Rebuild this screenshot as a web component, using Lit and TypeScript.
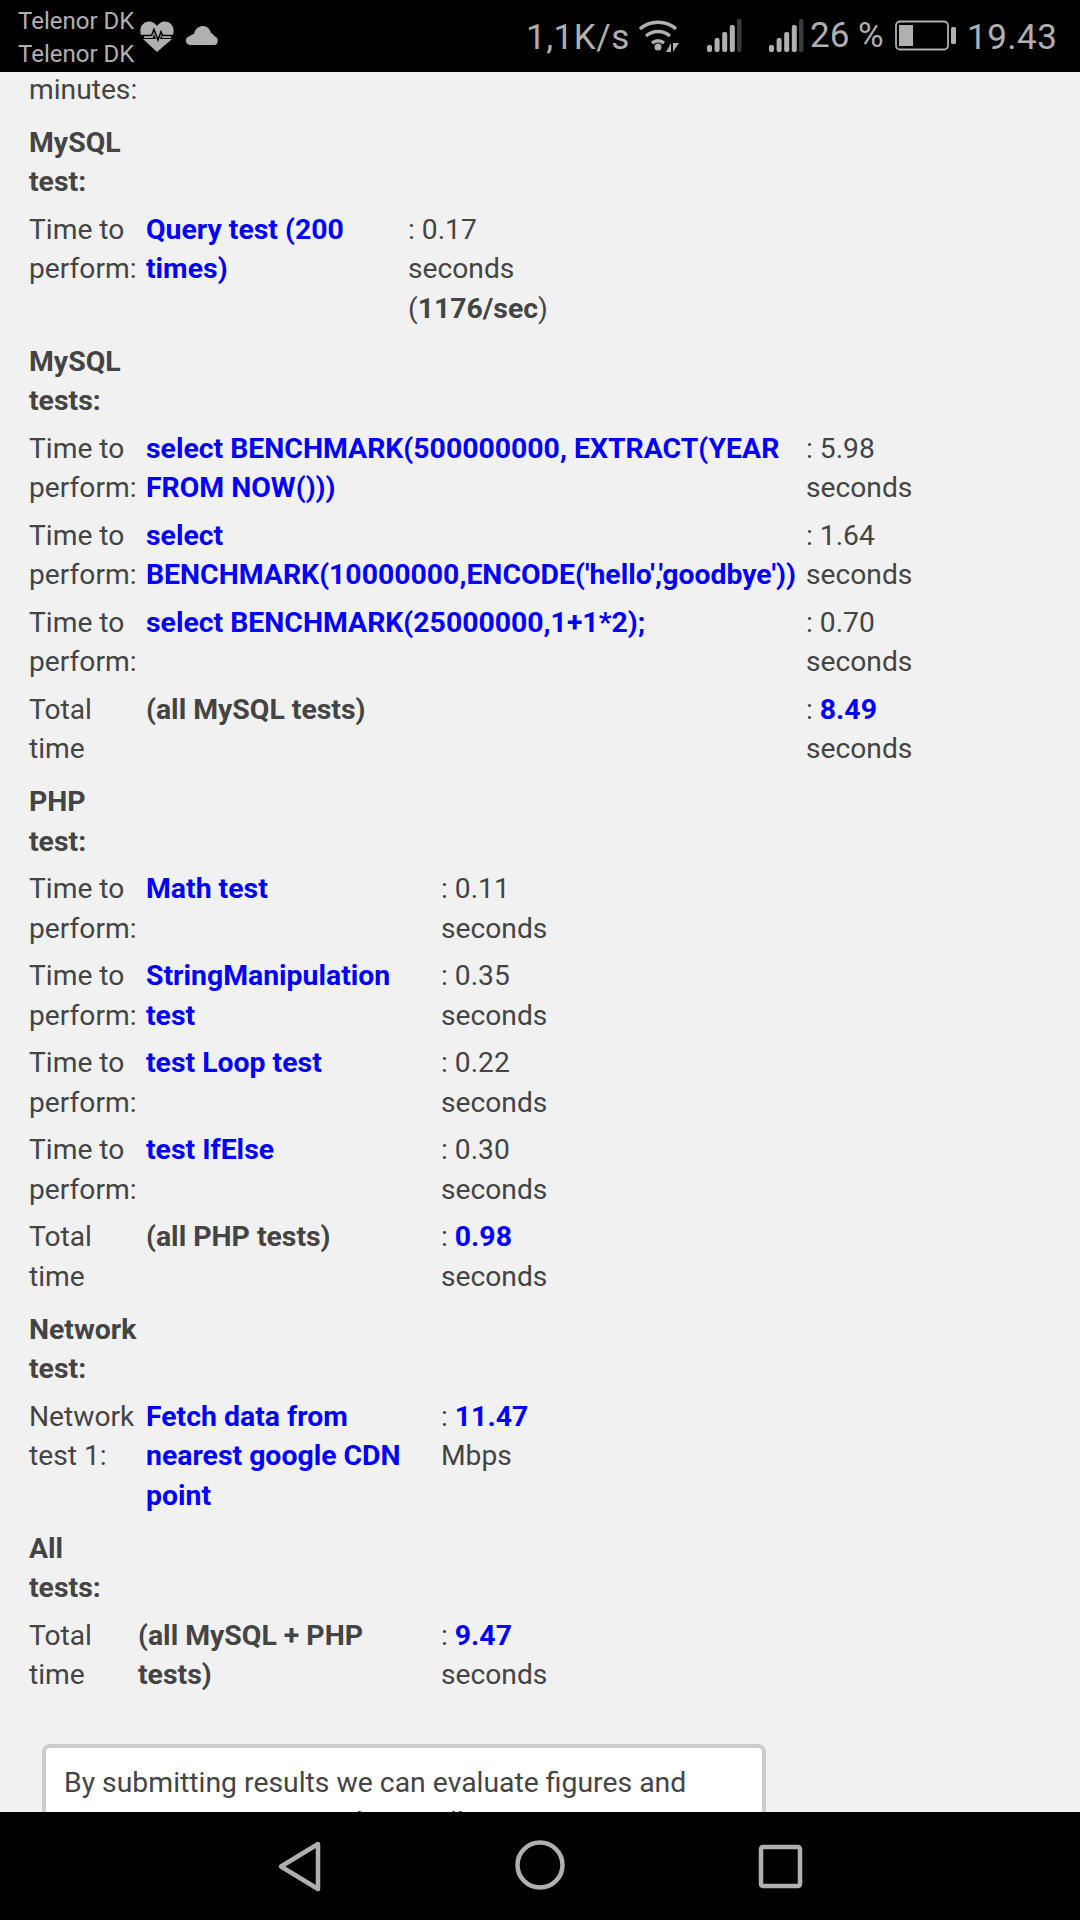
import { LitElement, html, css, svg } from "lit";
import { customElement } from "lit/decorators.js";

@customElement("app-root")
export class AppRoot extends LitElement {
  static styles = css`
    :host { display: block; width: 1080px; height: 1920px; overflow: hidden; font-family: Roboto, sans-serif; font-size: 28.2px; line-height: 39.5px; color: #444; background: #f1f1f1; }
    .screen { display: flex; flex-direction: column; height: 1920px; }
    .status { height: 72px; flex: none; background: #000; color: #b0b0b0; position: relative; }
    .carrier { position: absolute; left: 18px; top: 5px; font-size: 24px; line-height: 33px; }
    .hr { position: absolute; left: 139px; top: 20px; }
    .cl { position: absolute; left: 185px; top: 25px; }
    .right { position: absolute; left: 520px; top: 0; height: 72px; width: 560px; }
    .speed { position: absolute; left: 6px; top: 18px; font-size: 35px; line-height: 40px; letter-spacing: 0.5px; white-space: nowrap; }
    .pct { position: absolute; left: 290px; top: 16px; font-size: 35px; line-height: 40px; white-space: nowrap; }
    .time { position: absolute; left: 447px; top: 18px; font-size: 35px; line-height: 40px; letter-spacing: 0.5px; white-space: nowrap; }
    .right svg { position: absolute; }
    .content { flex: 1; min-height: 0; overflow: hidden; padding-left: 29px; }
    .minutes { margin-top: -2.5px; }
    .sec { display: grid; row-gap: 8px; margin-top: 13.5px; }
    .s1 { grid-template-columns: 117px 262px auto; }
    .s2 { grid-template-columns: 117px 660px auto; }
    .s3 { grid-template-columns: 117px 295px auto; }
    .s4 { grid-template-columns: 109px 303px auto; }
    .h { grid-column: 1 / -1; font-weight: 700; font-size: 28.4px; }
    b { font-weight: 700; font-size: 28.4px; }
    .q { color: #0000ff; font-weight: 700; font-size: 28.4px; }
    .card { width: 724px; box-sizing: border-box; margin: 49px 0 0 13px; border: 4px solid #ccc; border-radius: 8px; background: #fff; padding: 15.5px 18px; font-size: 28.35px; }
    .nav { height: 108px; flex: none; background: #000; display: flex; justify-content: center; }
  `;

  row(a: unknown, b: unknown, c: unknown) {
    return html`<div>${a}</div><div>${b}</div><div>${c}</div>`;
  }
  perf(q: string, c: string) {
    return this.row(html`Time to<br />perform:`, html`<span class="q">${q}</span>`, html`: ${c}<br />seconds`);
  }

  render() {
    return html`<div class="screen">
      <div class="status">
        <div class="carrier">Telenor DK<br />Telenor DK</div>
        <svg class="hr" width="36" height="34" viewBox="0 0 36 34">
          <path fill="#b0b0b0" d="M18 32 L4 19 H33 Z M2 15 C-1 5 7 0 13 2 C15 3 17 4 18 6 C19 4 21 3 23 2 C29 0 37 5 34 15 H24 L22 11 L19 20 L15 9 L13 15 Z"/>
          <path fill="none" stroke="#b0b0b0" stroke-width="2" d="M5 17 H13 L15 11 L19 22 L22 13 L24 17 H32"/>
          <path fill="none" stroke="#000" stroke-width="1.6" d="M2 15.5 H12.5 L15 9.5 L19 20 L22 12 L23.5 15.5 H34"/>
        </svg>
        <svg class="cl" width="34" height="22" viewBox="0 0 34 22">
          <path fill="#b0b0b0" d="M5 20 C0 20 -1 12 5 11 C6 10 7 9 9 9 C10 3 15 1 18 1 C22 1 25 4 26 8 C28 9 29 10 29 11 C34 12 34 20 29 20 Z"/>
        </svg>
        <div class="right">
          <div class="speed">1,1K/s</div>
          ${this.wifi()}
          ${this.signal(186)}
          ${this.signal(248)}
          <div class="pct">26 %</div>
          <svg style="left:375px;top:20px" width="62" height="32" viewBox="0 0 62 32">
            <rect x="1" y="1.5" width="52" height="28" rx="4" fill="none" stroke="#b0b0b0" stroke-width="1.8"/>
            <rect x="4" y="5" width="14" height="21" fill="#b0b0b0"/>
            <rect x="56" y="7" width="5" height="17" rx="1.5" fill="#b0b0b0"/>
          </svg>
          <div class="time">19.43</div>
        </div>
      </div>
      <div class="content">
        <div class="minutes">minutes:</div>
        <div class="sec s1">
          <div class="h">MySQL<br />test:</div>
          ${this.row(html`Time to<br />perform:`, html`<span class="q">Query test (200<br />times)</span>`, html`: 0.17<br />seconds<br />(<b>1176/sec</b>)`)}
        </div>
        <div class="sec s2">
          <div class="h">MySQL<br />tests:</div>
          ${this.perf("select BENCHMARK(500000000, EXTRACT(YEAR FROM NOW()))", "5.98")}
          ${this.perf("select BENCHMARK(10000000,ENCODE('hello','goodbye'))", "1.64")}
          ${this.perf("select BENCHMARK(25000000,1+1*2);", "0.70")}
          ${this.row(html`Total<br />time`, html`<b>(all MySQL tests)</b>`, html`: <span class="q">8.49</span><br />seconds`)}
        </div>
        <div class="sec s3">
          <div class="h">PHP<br />test:</div>
          ${this.perf("Math test", "0.11")}
          ${this.perf("StringManipulation test", "0.35")}
          ${this.perf("test Loop test", "0.22")}
          ${this.perf("test IfElse", "0.30")}
          ${this.row(html`Total<br />time`, html`<b>(all PHP tests)</b>`, html`: <span class="q">0.98</span><br />seconds`)}
        </div>
        <div class="sec s3">
          <div class="h">Network<br />test:</div>
          ${this.row(html`Network<br />test 1:`, html`<span class="q">Fetch data from<br />nearest google CDN<br />point</span>`, html`: <span class="q">11.47</span><br />Mbps`)}
        </div>
        <div class="sec s4">
          <div class="h">All<br />tests:</div>
          ${this.row(html`Total<br />time`, html`<b>(all MySQL + PHP<br />tests)</b>`, html`: <span class="q">9.47</span><br />seconds`)}
        </div>
        <div class="card">By submitting results we can evaluate figures and compare our server and you will see your score</div>
      </div>
      <div class="nav">
        <svg width="1080" height="108" viewBox="0 0 1080 108">
          <path d="M318 32 L281 54.5 L318 77 Z" fill="none" stroke="#b0b0b0" stroke-width="4.5" stroke-linejoin="round"/>
          <circle cx="540" cy="53" r="22.5" fill="none" stroke="#b0b0b0" stroke-width="4.5"/>
          <rect x="761" y="35" width="39" height="39" rx="2" fill="none" stroke="#b0b0b0" stroke-width="4.5"/>
        </svg>
      </div>
    </div>`;
  }

  wifi() {
    return html`<svg style="left:118px;top:19px" width="42" height="36" viewBox="0 0 42 36">
      ${svg`<g fill="none" stroke="#b0b0b0" stroke-width="3.5"><path d="M2 10 C12 1 28 1 38 10"/><path d="M8 17 C15 11 25 11 32 17"/><path d="M14 24 C18 21 22 21 26 24"/></g>
      <circle cx="20" cy="28" r="3.5" fill="#b0b0b0"/><path fill="#b0b0b0" d="M33 24 V33 H28 Z M35 24 H41 L35 33 Z"/>`}
    </svg>`;
  }
  signal(left: number) {
    const bars = [[0, 45, 7], [1, 38, 14], [2, 32, 20], [3, 25, 27]];
    return html`<svg style="left:${left}px;top:0" width="38" height="56" viewBox="0 0 38 56">
      ${bars.map(([i, y, h]) => svg`<rect x=${1 + i * 7.6} y=${y} width="5" height=${h} rx="2" fill="#b0b0b0"/>`)}
      <rect x="31" y="19" width="4.5" height="33" rx="2" fill="#3a3a3a"/>
    </svg>`;
  }
}
